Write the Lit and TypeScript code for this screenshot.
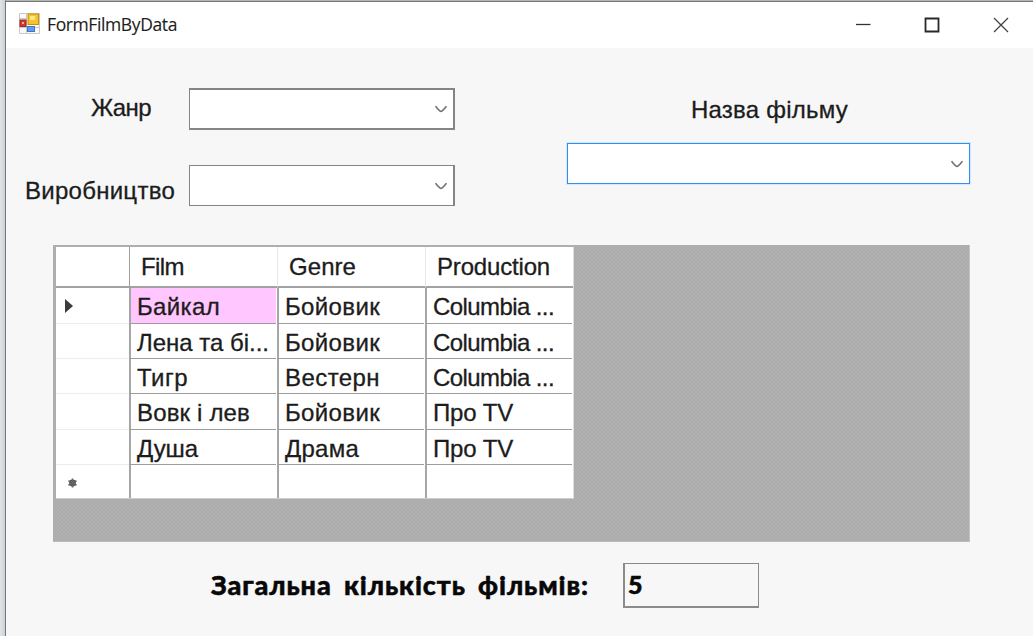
import { LitElement, html, css, svg } from "lit";
import { customElement, property } from "lit/decorators.js";

@customElement("combo-box")
class ComboBox extends LitElement {
  static styles = css`
    :host { display: flex; box-sizing: border-box; height: 41px; background: #fff; border: 1px solid #858585; justify-content: flex-end; align-items: center; }
    :host([heavy]) { border-width: 2px 2px 2px 1px; height: 42px; }
    :host([side]) { border-right-width: 2px; }
    :host([focused]) { border-color: #2b90ee; box-shadow: 0 0 0 1px #d3e9fc; }
    .arrow { width: 12px; height: 8px; margin: 0 6px 0 0; }
  `;
  render() {
    return html`<svg class="arrow" viewBox="0 0 12 8"><path d="M.6 1.2Q2 3.5 4.8 5.8Q6 6.9 7.2 5.8Q10 3.5 11.4 1.2" fill="none" stroke="#747474" stroke-width="1.6"/></svg>`;
  }
}

@customElement("data-grid")
class DataGrid extends LitElement {
  @property({ attribute: false }) rows: string[][] = [];
  static styles = css`
    :host { display: block; box-sizing: border-box; width: 917px; height: 297px; padding: 2px 0 0 3px; background: repeating-conic-gradient(#acacac 0 25%, #b0b0b0 0 50%) 0 0 / 4px 4px; border-right: 1px solid #c2c4c9; border-bottom: 1px solid #b8babf; }
    .sheet { width: 518px; height: 252px; box-sizing: border-box; background: #fff; border-right: 1px solid #ddd; border-bottom: 1px solid #ccc; display: grid; grid-template-columns: 73px 148px 148px 148px; grid-template-rows: 41px 36px 35px 35px 36px 35px 33px; font-size: 24px; color: #1c1c1c; }
    .head { border-bottom: 2px solid #a2a2a2; box-sizing: border-box; line-height: 39px; padding-left: 11px; border-left: 1px solid #e8e8e8; white-space: nowrap; }
    .head.first { border-left-color: #a0a0a0; }
    .head.corner { border-left: 0; }
    .rowhead { display: flex; align-items: center; border-bottom: 1px solid #ececec; box-sizing: border-box; padding-left: 9px; }
    .cell { box-sizing: border-box; border-left: 2px solid #a6a6a6; border-bottom: 1px solid #9d9d9d; margin-right: 1px; padding-left: 6px; white-space: nowrap; line-height: 37px; overflow: hidden; }
    .cell.chosen { background: #ffc6ff; }
    .cell.last, .rowhead.last { border-bottom: 0; }
  `;
  render() {
    const heads = ["Film", "Genre", "Production"];
    return html`<div class="sheet">
      <div class="head corner"></div>
      ${heads.map((h, i) => html`<div class="head ${i ? "" : "first"}"><fit-text .text=${h} .width=${[42, 66, 112][i]}></fit-text></div>`)}
      ${this.rows.map((r, y) => html`
        <div class="rowhead ${y === 5 ? "last" : ""}">${y === 0
          ? svg`<svg width="8" height="14" viewBox="0 0 8 14"><path d="M0 0L8 7L0 14Z" fill="#3c3c3c"/></svg>`
          : y === 5
            ? html`<svg width="14" height="12" viewBox="0 0 14 12"><circle cx="7.5" cy="7" r="3.4" fill="#505050"/><path d="M7.5 2.5V11.5M3.5 4.8L11.5 9.2M3.5 9.2L11.5 4.8" stroke="#666" stroke-width="1.6"/></svg>`
            : ""}</div>
        ${r.map((c, x) => html`<div class="cell ${x === 0 && y === 0 ? "chosen" : ""} ${y === 5 ? "last" : ""}">${c ? html`<fit-text .text=${c.split("|")[0]} .width=${+c.split("|")[1]}></fit-text>` : ""}</div>`)}
      `)}
    </div>`;
  }
}

/* Text whose tracking is adjusted so that the line takes a given width. */
@customElement("fit-text")
class FitText extends LitElement {
  @property() text = "";
  @property({ type: Number }) width = 0;
  static styles = css`
    :host { display: inline-block; white-space: pre; }
    .line { display: inline-block; -webkit-text-stroke: var(--stroke, 0.3px) currentColor; }
  `;
  render() {
    return html`<span class="line">${this.text}</span>`;
  }
  updated() {
    const line = this.renderRoot.querySelector(".line") as HTMLElement;
    line.style.letterSpacing = "0";
    const natural = line.getBoundingClientRect().width;
    if (natural && this.width) line.style.letterSpacing = `${(this.width + 1 - natural) / this.text.length}px`;
  }
}

@customElement("app-root")
class AppRoot extends LitElement {
  static styles = css`
    :host { display: block; box-sizing: border-box; width: 1033px; height: 636px; overflow: hidden; padding-left: 5px; background: linear-gradient(90deg, #e0e5e8, #cbd0d3 5px); font-family: "Liberation Sans", Arial, sans-serif; color: #1c1c1c; }
    .window { box-sizing: border-box; height: 636px; background: #f7f7f7; border-left: 1px solid #777; border-top: 1px solid #b5b5b5; }
    .top { height: 1px; background: #777; }
    .title { height: 46px; box-sizing: border-box; background: #fff; display: flex; align-items: center; padding: 0 24px 0 13px; }
    .name { font: 17.5px "Open Sans", "Noto Sans", sans-serif; margin-left: 7px; flex: 1; line-height: 44px; height: 46px; --stroke: 0.1px; }
    .logo { margin-top: -3px; }
    .buttons { display: flex; gap: 53px; align-items: center; }
    .form { display: grid; grid-template-columns: 183px 266px 112px 403px; font-size: 24px; height: 197px; }
    .labels, .combos { display: flex; flex-direction: column; }
    .labels { align-items: flex-end; }
    .genre { margin: 45px 38px 0 0; line-height: 30px; }
    .production { margin: 53px 14px 0 0; line-height: 30px; }
    .combos { padding-top: 40px; gap: 35px; }
    .film { grid-column: 4; display: flex; flex-direction: column; }
    .film .caption { margin: 47px 0 18px 124px; line-height: 30px; }
    .grid { margin-left: 47px; }
    .total { display: flex; align-items: center; margin: 20px 0 0 205px; font: 900 27px Lato, sans-serif; color: #080808; --stroke: 0.5px; }
    .total .caption { width: 412px; line-height: 45px; height: 46px; word-spacing: 5px; }
    .count { box-sizing: border-box; width: 136px; height: 45px; border: 1px solid #8b8b8b; border-left-width: 2px; border-bottom-width: 2px; padding-left: 3px; line-height: 41px; font-size: 25px; -webkit-text-stroke: 0.5px #080808; }
  `;
  render() {
    const rows = [
      ["Байкал|82", "Бойовик|94", "Columbia ...|120"],
      ["Лена та бі...|131", "Бойовик|94", "Columbia ...|120"],
      ["Тигр|50", "Вестерн|94", "Columbia ...|120"],
      ["Вовк і лев|112", "Бойовик|94", "Про TV|79"],
      ["Душа|60", "Драма|73", "Про TV|79"],
      ["", "", ""],
    ];
    return html`<div class="window">
      <div class="top"></div>
      <div class="title">
        <svg class="logo" width="21" height="21" viewBox="0 0 21 21">
          <path d="M.5 .5H20.5V20.5H.5ZM7.5 .5V20.5M.5 5.5H8M.5 14.5H20" fill="#fafafa" stroke="#c9c9c9"/>
          <rect x="9" y="1" width="10.5" height="10.5" fill="#f5c32c" stroke="#c98f12"/><rect x="11" y="3" width="5" height="4" fill="#ffe67c"/>
          <rect x="1" y="7" width="6" height="6.5" fill="#d3362c" stroke="#9e2b24"/><rect x="3" y="9" width="2" height="2" fill="#f8aaa1"/>
          <rect x="8.5" y="13.5" width="7" height="5" fill="#5f9df0" stroke="#3d75ca"/>
        </svg>
        <div class="name"><fit-text .text=${"FormFilmByData"} .width=${129}></fit-text></div>
        <div class="buttons">
          <svg width="15" height="16" viewBox="0 0 15 16"><path d="M0 7.5H14.5" stroke="#333" stroke-width="1.3"/></svg>
          <svg width="16" height="16" viewBox="0 0 16 16"><path d="M1.5 1.5H14.5V14.5H1.5Z" fill="none" stroke="#292929" stroke-width="1.8"/></svg>
          <svg width="16" height="16" viewBox="0 0 16 16"><path d="M1 1L15 15M15 1L1 15" stroke="#444" stroke-width="1.3"/></svg>
        </div>
      </div>
      <div class="form">
        <div class="labels">
          <div class="genre"><fit-text .text=${"Жанр"} .width=${59}></fit-text></div>
          <div class="production"><fit-text .text=${"Виробництво"} .width=${149}></fit-text></div>
        </div>
        <div class="combos"><combo-box heavy></combo-box><combo-box side></combo-box></div>
        <div class="film"><div class="caption"><fit-text .text=${"Назва фільму"} .width=${156}></fit-text></div><combo-box focused></combo-box></div>
      </div>
      <data-grid class="grid" .rows=${rows}></data-grid>
      <div class="total">
        <div class="caption"><fit-text .text=${"Загальна кількість фільмів:"} .width=${377}></fit-text></div>
        <div class="count">5</div>
      </div>
    </div>`;
  }
}
